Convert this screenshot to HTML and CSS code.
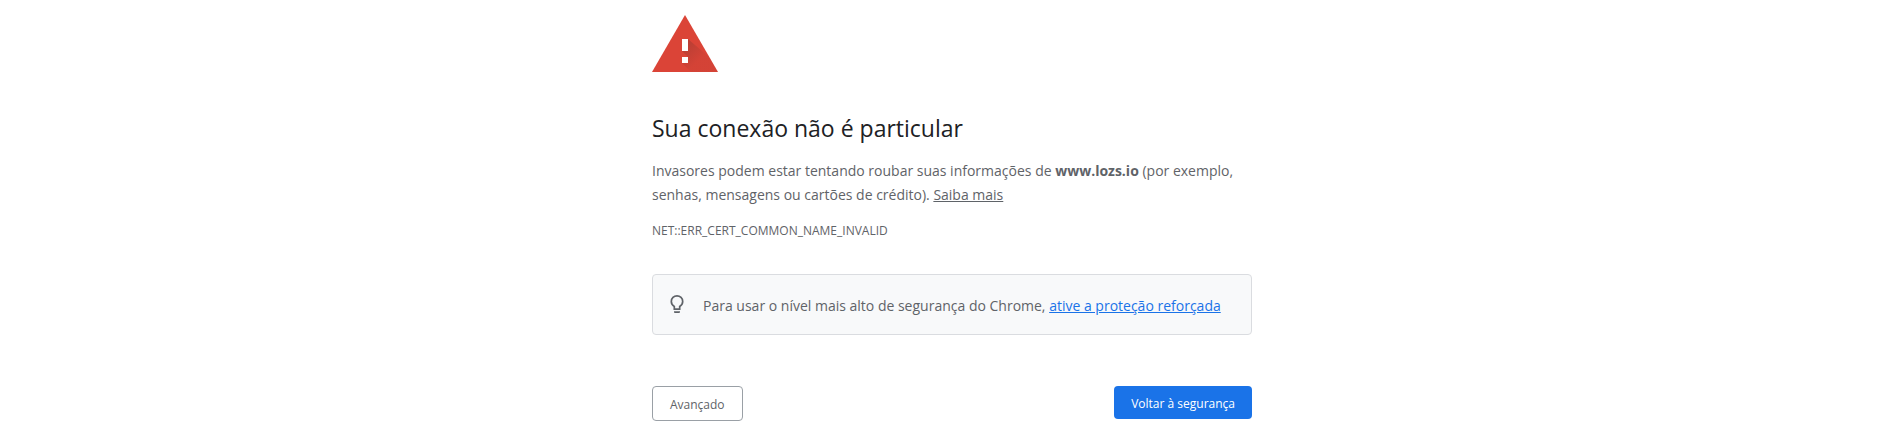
FILE: index.html
```html
<!DOCTYPE html>
<html lang="pt-BR">
<head>
<meta charset="utf-8">
<meta name="viewport" content="width=device-width, initial-scale=1">
<title>Erro de privacidade</title>
<link rel="stylesheet" href="styles.css">
</head>
<body>
<main class="interstitial">
  <svg class="warning-icon" viewBox="0 0 66 57" aria-hidden="true">
    <defs>
      <linearGradient id="shade" gradientUnits="userSpaceOnUse" x1="32" y1="32" x2="46" y2="46">
        <stop offset="0" stop-color="#262626" stop-opacity=".18"/>
        <stop offset="1" stop-color="#262626" stop-opacity=".04"/>
      </linearGradient>
    </defs>
    <path fill="#db4437" d="M33 0 66 57H0z"/>
    <path fill="url(#shade)" d="M36 24 57 42 66 57H39L30 48 36 42 30 36z"/>
    <path fill="#fff" d="M30 24h6v12h-6zM30 42h6v6h-6z"/>
  </svg>
  <h1 class="title">Sua conexão não é particular</h1>
  <p class="message">Invasores podem estar tentando roubar suas informações de <strong>www.lozs.io</strong> (por exemplo, senhas, mensagens ou cartões de crédito). <a class="learn-more" href="#">Saiba mais</a></p>
  <p class="error-code">NET::ERR_CERT_COMMON_NAME_INVALID</p>
  <section class="tip">
    <svg class="bulb-icon" viewBox="0 0 20 20" aria-hidden="true">
      <path fill="none" stroke="#5f6368" stroke-width="1.700" d="M7.300 15.200V12.500C5.500 11.400 4.300 9.600 4.300 7.500a5.700 5.700 0 0 1 11.400 0c0 2.100-1.200 3.900-3 5v2.700z"/>
      <path fill="#5f6368" d="M7 17.300h6v.7c0 .5-.4.900-.9.900H7.900c-.5 0-.9-.4-.9-.9z"/>
    </svg>
    <p class="tip-text">Para usar o nível mais alto de segurança do Chrome, <a class="tip-link" href="#">ative a proteção reforçada</a></p>
  </section>
  <div class="actions">
    <button class="button secondary" type="button">Avançado</button>
    <button class="button primary" type="button">Voltar à segurança</button>
  </div>
</main>
</body>
</html>
```
FILE: styles.css
```css
* {
  box-sizing: border-box;
}

body {
  margin: 0;
  background: #fff;
  color: #5f6368;
  font-family: "Segoe UI", "Open Sans", "Noto Sans", sans-serif;
  font-size: 14px;
  line-height: 24px;
}

.interstitial {
  max-width: 600px;
  margin: 0 auto;
  padding-top: 15px;
}

.warning-icon {
  display: block;
  width: 66px;
  height: 57px;
}

.title {
  margin: 40px 0 15px;
  color: #202124;
  font-size: 23px;
  font-weight: 400;
  line-height: 32px;
}

.message,
.tip-text {
  margin: 0;
}

.message strong {
  font-weight: 700;
}

.learn-more {
  color: inherit;
}

.error-code {
  margin: 13px 0 0;
  font-size: 12px;
  line-height: 22px;
}

.tip {
  display: flex;
  align-items: flex-start;
  gap: 16px;
  margin-top: 32px;
  padding: 19px 14px 16px;
  border: 1px solid #dadce0;
  border-radius: 4px;
  background: #f8f9fa;
}

.bulb-icon {
  flex: none;
  width: 20px;
  height: 20px;
}

.tip-link {
  color: #1a73e8;
}

.actions {
  display: flex;
  justify-content: space-between;
  align-items: flex-start;
  margin-top: 51px;
}

.button {
  padding: 9px 17px 7px;
  border: 0;
  border-radius: 4px;
  font: inherit;
  font-size: 12px;
  line-height: 17px;
  cursor: pointer;
}

.secondary {
  border: 1px solid #9aa0a6;
  background: #fff;
  color: #5f6368;
}

.primary {
  background: #1a73e8;
  color: #fff;
}
```
